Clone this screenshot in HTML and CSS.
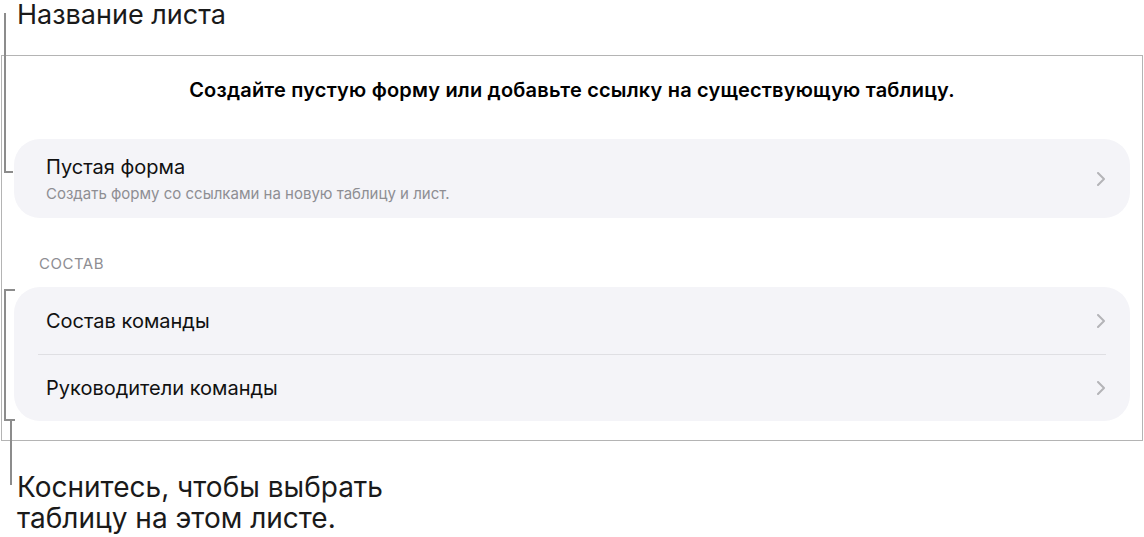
FILE: index.html
```html
<!DOCTYPE html>
<html lang="ru">
<head>
    <meta charset="UTF-8">
    <meta name="viewport" content="width=device-width, initial-scale=1.0">
    <title>Новая форма</title>
    <link rel="stylesheet" href="styles.css">
</head>
<body>
    <div class="callout callout-top">Название листа</div>

    <div class="sheet">
        <h1 class="sheet-title">Создайте пустую форму или добавьте ссылку на существующую таблицу.</h1>

        <div class="group">
            <div class="row row-tall">
                <div class="row-text">
                    <div class="row-name">Пустая форма</div>
                    <div class="row-note">Создать форму со ссылками на новую таблицу и лист.</div>
                </div>
                <svg class="chevron" viewBox="0 0 8 14"><path d="M1 1l6 6-6 6"/></svg>
            </div>
        </div>

        <div class="section-label">СОСТАВ</div>

        <div class="group">
            <div class="row">
                <div class="row-name">Состав команды</div>
                <svg class="chevron" viewBox="0 0 8 14"><path d="M1 1l6 6-6 6"/></svg>
            </div>
            <div class="row">
                <div class="row-name">Руководители команды</div>
                <svg class="chevron" viewBox="0 0 8 14"><path d="M1 1l6 6-6 6"/></svg>
            </div>
        </div>
    </div>

    <div class="callout callout-bottom">Коснитесь, чтобы выбрать<br>таблицу на этом листе.</div>

    <!-- callout lines -->
    <div class="line line-name"></div>
    <div class="bracket"></div>
    <div class="line line-tail"></div>
</body>
</html>
```

FILE: styles.css
```css
* {
  box-sizing: border-box;
  margin: 0;
}

body {
  position: relative;
  width: 1144px;
  height: 537px;
  overflow: hidden;
  background: #fff;
  font-family: Inter, Roboto, "Noto Sans", sans-serif;
  color: #000;
}

.callout {
  color: #1a1a1a;
  padding-left: 17px;
}

.callout-top {
  height: 55px;
  font-size: 27px;
  line-height: 30px;
}

.callout-bottom {
  padding-top: 31px;
  font-size: 28px;
  line-height: 31px;
}

.sheet {
  margin-left: 1px;
  width: 1142px;
  height: 386px;
  border: 1px solid #b4b4b4;
  padding: 0 12px 0 12px;
}

.sheet-title {
  font-size: 20px;
  font-weight: 600;
  letter-spacing: 0.2px;
  line-height: 24px;
  text-align: center;
  margin-top: 22px;
  margin-bottom: 37px;
}

.group {
  background: #f4f4f8;
  border-radius: 26px;
  padding: 0 24px;
}

.row {
  display: flex;
  align-items: center;
  justify-content: space-between;
  height: 67px;
  padding-left: 8px;
  padding-right: 1px;
  border-top: 1px solid #dfdfe3;
}

.row:first-child {
  border-top: none;
}

.row-tall {
  height: 79px;
}

.row-name {
  font-size: 20px;
  color: #111;
}

.row-note {
  font-size: 15px;
  color: #8e8e93;
  margin-top: 5px;
}

.chevron {
  width: 8px;
  height: 14px;
  fill: none;
  stroke: #b4b4b8;
  stroke-width: 2;
  stroke-linecap: round;
  stroke-linejoin: round;
}

.section-label {
  font-size: 15px;
  letter-spacing: 0.5px;
  line-height: 18px;
  color: #8e8e93;
  padding-left: 25px;
  margin-top: 37px;
  margin-bottom: 14px;
}

.line,
.bracket {
  position: absolute;
  border-color: #8c8c8c;
  border-style: solid;
  border-width: 0;
}

.line-name {
  left: 4px;
  top: 13px;
  width: 9px;
  height: 160px;
  border-left-width: 2px;
  border-bottom-width: 2px;
}

.bracket {
  left: 4px;
  top: 289px;
  width: 11px;
  height: 132px;
  border-width: 2px 0 2px 2px;
}

.line-tail {
  left: 10px;
  top: 421px;
  width: 2px;
  height: 64px;
  border-left-width: 2px;
}
```
